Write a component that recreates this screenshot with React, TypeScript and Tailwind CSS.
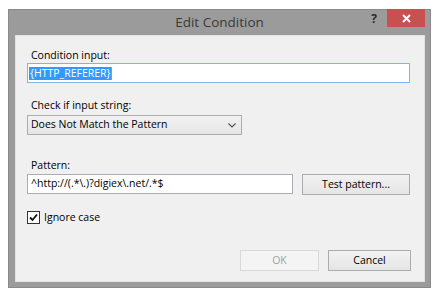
export default function App() {
  return (
    <div className="h-[300px] w-[444px] bg-white pl-[8px] pt-[9px] font-['Open_Sans',sans-serif] text-[10.5px] text-black [font-stretch:88%]">
      <div className="flex h-[279px] w-[423px] flex-col bg-[#9b9b9b] shadow-[inset_0_0_0_1px_#8a8a8a]">
        {/* title bar */}
        <div className="grid h-[26px] grid-cols-[1fr_auto_1fr]">
          <div />
          <div className="pt-[4px] text-[13.5px] leading-[18px] text-[#3a3a3a] [font-stretch:92%]">Edit Condition</div>
          <div className="flex justify-end pr-[6px]">
            <span className="mr-[10px] mt-[2px] text-[12px] font-bold leading-[16px] text-[#2b2b2b]">?</span>
            <button className="flex h-[18px] w-[38px] items-center justify-center bg-[#c75050]">
              <svg width="9" height="9" viewBox="0 0 9 9">
                <path d="M1 1 L8 8 M8 1 L1 8" stroke="#fff" strokeWidth="2" />
              </svg>
            </button>
          </div>
        </div>

        {/* client area */}
        <div className="mb-[6px] ml-[7px] mr-[6px] flex flex-1 flex-col bg-[#f0f0f0] pl-[12px] pr-[15px] pt-[13px] shadow-[inset_0_0_0_1px_#e2e2e2]">
          <div className="pl-[4px] leading-[15px]">Condition input:</div>
          <div className="flex h-[20px] items-center border border-[#7eb4ea] bg-white pl-[1px]">
            <span className="bg-[#3399ff] px-[1px] leading-[13px] text-white">{'{HTTP_REFERER}'}</span>
            <span className="h-[13px] w-px bg-[#e08a2c]" />
          </div>

          <div className="mt-[15px] pl-[4px] leading-[15px]">Check if input string:</div>
          <div className="mt-[2px] flex h-[20px] w-[215px] items-center justify-between border border-[#acacac] bg-gradient-to-b from-[#f2f2f2] to-[#e5e5e5] pl-[3px] pr-[5px]">
            <span>Does Not Match the Pattern</span>
            <svg width="8" height="5" viewBox="0 0 8 5">
              <path d="M0.5 0.5 L4 4 L7.5 0.5" fill="none" stroke="#555" strokeWidth="1.2" />
            </svg>
          </div>

          <div className="mt-[23px] pl-[4px] leading-[15px]">Pattern:</div>
          <div className="mt-[1px] flex gap-[9px]">
            <div className="flex h-[20px] w-[266px] items-center border border-[#abadb3] bg-white pl-[3px]">
              ^http://(.*\.)?digiex\.net/.*$
            </div>
            <button className="h-[21px] flex-1 border border-[#acacac] bg-gradient-to-b from-[#f2f2f2] to-[#e5e5e5] text-black">
              Test pattern...
            </button>
          </div>

          <div className="mt-[15px] flex h-[15px] items-center gap-[4px]">
            <span className="flex h-[13px] w-[13px] items-center justify-center border border-[#333] bg-white">
              <svg width="9" height="9" viewBox="0 0 9 9">
                <path d="M1 4.5 L3.5 7 L8 1.5" fill="none" stroke="#111" strokeWidth="1.8" />
              </svg>
            </span>
            <span className="leading-[15px]">Ignore case</span>
          </div>

          <div className="mt-[25px] flex justify-end gap-[9px]">
            <button className="h-[21px] w-[79px] border border-[#d9d9d9] bg-[#f4f4f4] text-[#a3a3a3]">OK</button>
            <button className="-mr-px h-[21px] w-[83px] border border-[#acacac] bg-gradient-to-b from-[#f2f2f2] to-[#e5e5e5] text-black">
              Cancel
            </button>
          </div>
        </div>
      </div>
    </div>
  );
}
